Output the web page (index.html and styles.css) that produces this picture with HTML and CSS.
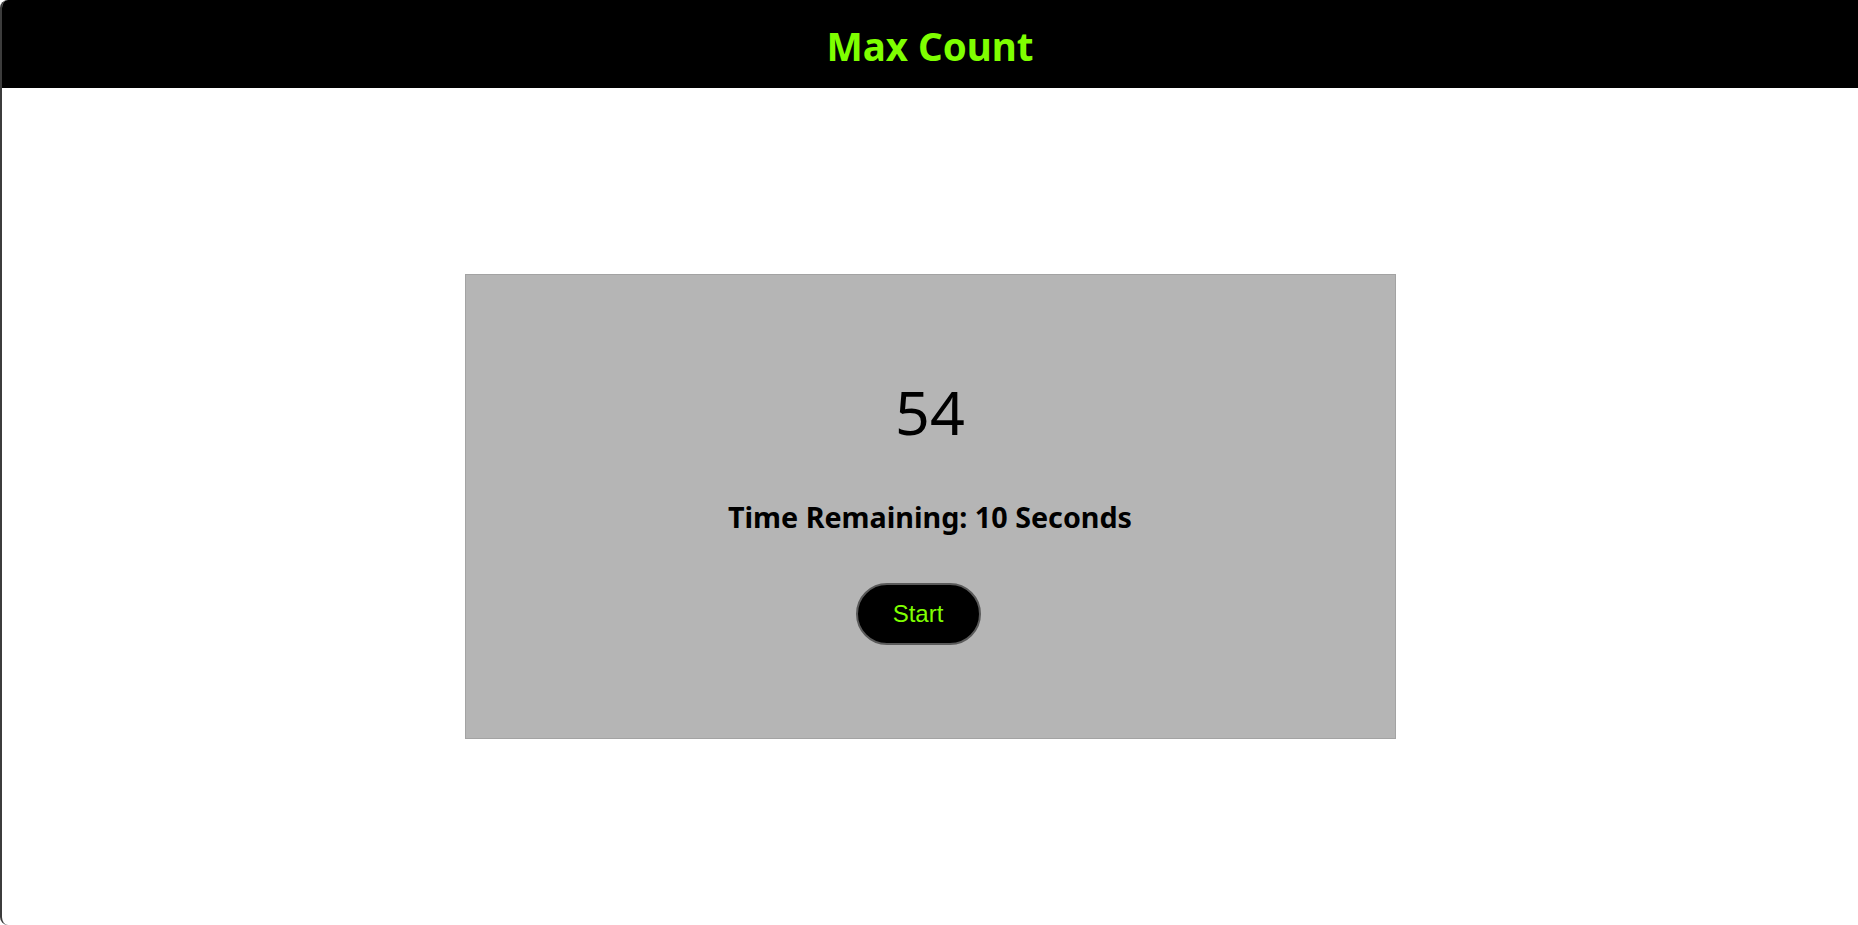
FILE: index.html
```html
<!DOCTYPE html>
<html>
<head>
<meta charset="utf-8">
<link rel="stylesheet" href="styles.css">
</head>
<body>
<div class="frame">
  <header class="topbar"><h1 class="title">Max Count</h1></header>
  <main class="stage">
    <section class="card">
      <div class="count">54</div>
      <div class="timer">Time Remaining: 10 Seconds</div>
      <button class="start">Start</button>
    </section>
  </main>
</div>
</body>
</html>
```

FILE: styles.css
```css
html, body {
  margin: 0;
  padding: 0;
  height: 100%;
  background: #ffffff;
}
body {
  font-family: "Noto Sans", "Open Sans", sans-serif;
}
.frame {
  box-sizing: border-box;
  height: 925px;
  border-left: 2px solid #3c3c3c;
  border-top-left-radius: 8px;
  border-bottom-left-radius: 8px;
  overflow: hidden;
  display: flex;
  flex-direction: column;
  background: #ffffff;
}
.topbar {
  height: 88px;
  flex: 0 0 88px;
  background: #000000;
  display: flex;
  align-items: center;
  justify-content: center;
}
.title {
  margin: 0;
  color: #7fff00;
  font-size: 38.5px;
  font-weight: 700;
  line-height: 1;
  padding-top: 4px;
}
.stage {
  flex: 1;
  display: flex;
  align-items: center;
  justify-content: center;
}
.card {
  box-sizing: border-box;
  width: 931px;
  height: 465px;
  background: #b5b5b5;
  border: 1px solid #a3a3a3;
  display: flex;
  flex-direction: column;
  align-items: center;
  padding-top: 106px;
}
.count {
  font-size: 61px;
  line-height: 1;
  color: #000;
}
.timer {
  margin-top: 61px;
  font-size: 28.7px;
  font-weight: 700;
  color: #000;
  line-height: 1;
}
.start {
  margin-top: 51px;
  margin-right: 24px;
  width: 125px;
  height: 62px;
  border-radius: 31px;
  background: #000;
  border: 2px solid #5a5a5a;
  color: #7fff00;
  font-family: "Liberation Sans", Arial, sans-serif;
  font-size: 24px;
  padding: 0;
}
```
